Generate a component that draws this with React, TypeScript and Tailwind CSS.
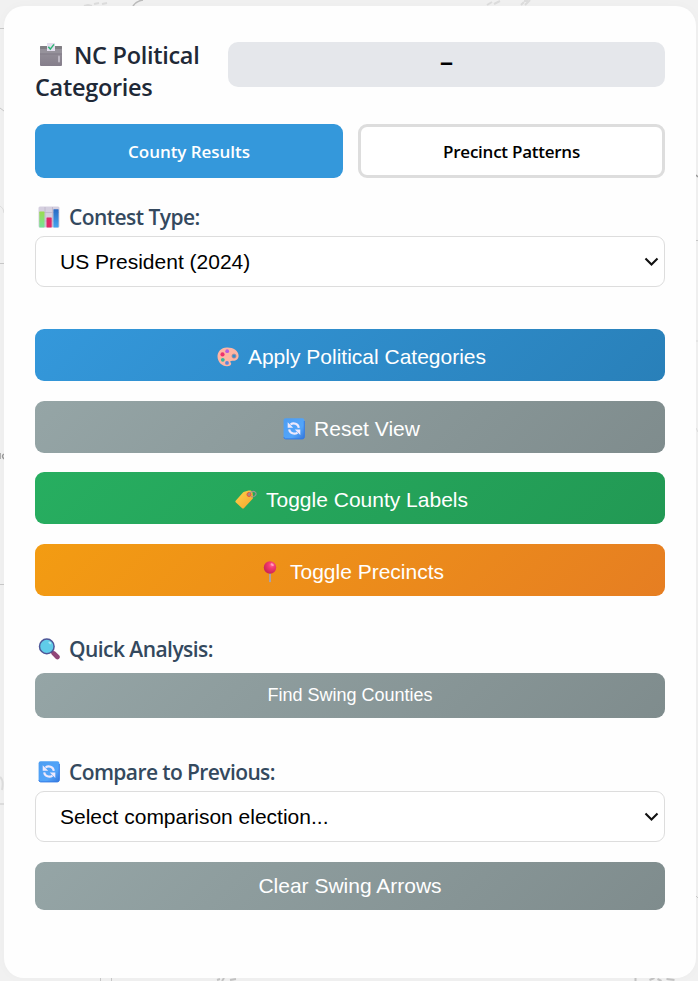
import type { ReactNode } from "react";

const ui = "font-['Open_Sans','Noto_Sans',sans-serif]";
const arial = "font-['Liberation_Sans',Arial,sans-serif]";

function BallotIcon() {
  return (
    <svg className="h-[25px] w-[24px] shrink-0" viewBox="0 0 24 25">
      <defs>
        <linearGradient id="ballot" x1="0" y1="0" x2="0" y2="1">
          <stop offset="0" stopColor="#98949c" />
          <stop offset="1" stopColor="#857e8b" />
        </linearGradient>
      </defs>
      <rect x="1" y="4" width="22" height="20" rx="1" fill="url(#ballot)" />
      <rect x="1" y="4" width="22" height="3" rx="1" fill="#7f7d82" />
      <rect x="1" y="7" width="22" height="4.500" fill="#96929b" />
      <rect x="1" y="11.500" width="22" height="1" fill="#827d88" />
      <path d="M8 1h8v8H8z" fill="#e4deee" />
      <path d="m9.300 4.800 2 2.300L15 2.400" fill="none" stroke="#2bb673" strokeWidth="1.500" />
      <rect x="19" y="13.500" width="2" height="7" rx="1" fill="#bcb7c2" />
    </svg>
  );
}

function ChartIcon() {
  return (
    <svg className="h-[22px] w-[22px] shrink-0" viewBox="0 0 22 22">
      <defs>
        <linearGradient id="barGreen" x1="0" y1="0" x2="0" y2="1">
          <stop offset="0" stopColor="#9bdc4d" />
          <stop offset="1" stopColor="#76e19a" />
        </linearGradient>
        <linearGradient id="barBlue" x1="0" y1="0" x2="0" y2="1">
          <stop offset="0" stopColor="#2869c4" />
          <stop offset="1" stopColor="#45a5ee" />
        </linearGradient>
      </defs>
      <rect x=".5" y=".5" width="21" height="21" rx="1.5" fill="#d5cfdf" />
      <path d="M7 1v20M14.5 1v20M1 6.5h20M1 15h20" stroke="#bcb5c8" strokeWidth=".8" />
      <rect x="1.3" y="5.5" width="5.2" height="16" rx=".4" fill="url(#barGreen)" />
      <rect x="8.5" y="11.5" width="5.2" height="10" rx=".4" fill="#df2866" />
      <rect x="15.4" y="3.3" width="5.2" height="18.2" rx=".4" fill="url(#barBlue)" />
    </svg>
  );
}

function PaletteIcon() {
  return (
    <svg className="h-[22px] w-[22px] shrink-0" viewBox="0 0 22 22">
      <path
        fill="#ffb5a3"
        fillRule="evenodd"
        d="M9.7 1.4C4 1.6.4 5.6.5 10.6c.1 5.6 4.5 9.600 9.300 9.700 2.700.100 4.600-1.100 4.400-2.700-.100-1-1.100-1.200-1-2 .100-.900 1.400-.800 3-.900 3.100-.100 5.400-1.800 5.400-5C21.600 4.700 16 1.100 9.700 1.400ZM17 8.200a1.900 1.900 0 1 1 0 3.800 1.900 1.900 0 0 1 0-3.800Z"
      />
      <circle cx="5.5" cy="8.4" r="2.1" fill="#ee326d" />
      <circle cx="10.2" cy="5.2" r="1.9" fill="#b85be1" />
      <circle cx="5.8" cy="13.8" r="1.9" fill="#35b7a2" />
      <circle cx="10" cy="16.9" r="1.9" fill="#5a87dc" />
      <circle cx="17" cy="10.100" r="2.100" fill="none" stroke="#95798c" strokeWidth=".600" />
    </svg>
  );
}

function RefreshIcon() {
  return (
    <svg className="h-[22px] w-[22px] shrink-0" viewBox="0 0 22 22">
      <defs>
        <linearGradient id="refresh" x1="0" y1="0" x2="1" y2="1">
          <stop offset="0" stopColor="#4d9df1" />
          <stop offset=".65" stopColor="#53a5fa" />
          <stop offset="1" stopColor="#3476db" />
        </linearGradient>
      </defs>
      <rect x=".6" y=".2" width="20.8" height="20.8" rx="2" fill="url(#refresh)" />
      <path d="M1 19.100c0 1.300.700 1.800 1.800 1.800h16.400c1.300 0 2.100-.700 2.100-2V3" fill="none" stroke="#347be5" strokeWidth="1" />
      <path d="M7.500 6.500c3-2.300 7.800-.800 8.300 3.300M14.500 14.600c-3 2.200-7.800.800-8.300-3.300" fill="none" stroke="#eee9fc" strokeWidth="2.100" />
      <path d="M4.700 4.300v5.500h5.500L4.700 4.300ZM17.300 16.900v-5.500h-5.500l5.500 5.500Z" fill="#eee9fc" />
    </svg>
  );
}

function TagIcon() {
  return (
    <svg className="h-[22px] w-[22px] shrink-0" viewBox="0 0 22 22">
      <defs>
        <linearGradient id="tag" x1="0" y1="0" x2="1" y2="1">
          <stop offset="0" stopColor="#ffd34b" />
          <stop offset="1" stopColor="#f4a42d" />
        </linearGradient>
      </defs>
      <path d="m9.300 2.800 4.200-1.200c1.400-.400 3.600-.200 3.900 1.500l.600 5.100c.100.900-.200 1.500-.800 2.100l-8.100 8.600c-.700.700-1.500.700-2.200 0L.9 13.500c-.700-.700-.700-1.400 0-2.100l7.300-8.100c.300-.300.600-.400 1.100-.500Z" fill="url(#tag)" />
      <circle cx="14" cy="5.500" r="2" fill="#a88c83" stroke="#e9533e" strokeWidth="1" />
      <path d="M13.800 5.500c1.600-3.500 5.600-3.800 6.900-1.900 1.500 2.400-2 5.200-4.700 4" fill="none" stroke="#9b9292" strokeWidth="1.100" />
    </svg>
  );
}

function PinIcon() {
  return (
    <svg className="h-[22px] w-[22px] shrink-0" viewBox="0 0 22 22">
      <defs>
        <radialGradient id="pin" cx=".65" cy=".3" r=".7">
          <stop offset="0" stopColor="#ff6c9b" />
          <stop offset=".35" stopColor="#f53b73" />
          <stop offset="1" stopColor="#cc2456" />
        </radialGradient>
      </defs>
      <path d="M10 12h2v8.500l-1 1-1-1z" fill="#aaa0a9" />
      <circle cx="11" cy="6.500" r="6.200" fill="url(#pin)" />
      <ellipse cx="13.200" cy="3.700" rx="1.700" ry="1.100" fill="#ff9dba" transform="rotate(35 13.200 3.700)" />
    </svg>
  );
}

function SearchIcon() {
  return (
    <svg className="h-[22px] w-[22px] shrink-0" viewBox="0 0 22 22">
      <path d="m13 13 3 3" stroke="#604776" strokeWidth="2.500" />
      <path d="m15.800 15.400 3.600 3.600" stroke="#914778" strokeWidth="4.700" strokeLinecap="round" />
      <circle cx="8.800" cy="8.400" r="7.300" fill="#60cce9" stroke="#4e5697" strokeWidth="1.500" />
      <ellipse cx="11.900" cy="4.900" rx="1.700" ry="1" fill="#a8e7f5" transform="rotate(35 11.900 4.900)" />
    </svg>
  );
}

function MapBackdrop() {
  return (
    <svg className="absolute inset-0 h-full w-full" viewBox="0 0 698 981" fill="none" stroke="#c8c8c8">
      <path d="M133 6q3-5 10-6" stroke="#bbb" strokeWidth="1.500" />
      <path d="M0 28.500h4M0 108l4 3M0 263.500h4M0 584.500h4M100.500 978v3M111.500 978v3M696 240.500h2M696 896l2 2" />
      <path d="M0 206q4 2 4 7M696 341h2M696 428l2 4" stroke="#ddd" />
      <path d="m84 6 4-1 4 1m2-2 5-1m3 1 5-1M487 5l5-3m2 2 6-3M521 5l3-3m1 3 5-5m-6 1h4" stroke="#ddd" strokeWidth="2" />
      <path d="M696 175l2 2M0 453v6m4-5q-3 2 0 5" stroke="#999" strokeWidth="1.500" />
      <path d="M0 777q4 3 2 13m-2 14h4" stroke="#ddd" strokeWidth="2" />
      <path d="M217 980l3-1m4-1-2 3m8-1 6-1M635.500 981v-3m14 2 5-2m3 1 4 2m5-2 8 1" stroke="#c4c4c4" strokeWidth="2" />
    </svg>
  );
}

function SectionLabel({ icon, className, children }: { icon: ReactNode; className: string; children: ReactNode }) {
  return (
    <div className={`${ui} flex h-[30px] items-center gap-[9px] pl-[3px] text-[21px] font-[560] text-[#34495e] ${className}`}>
      {icon}
      <span className="pt-px whitespace-nowrap">{children}</span>
    </div>
  );
}

function SelectField({ children }: { children: ReactNode }) {
  return (
    <button className={`${arial} flex h-[51px] w-full items-center justify-between rounded-[9px] border border-[#ddd] bg-white pr-[5px] pl-6 text-[21px] text-black`}>
      <span>{children}</span>
      <svg className="h-[10px] w-[15px]" viewBox="0 0 15 10" fill="none">
        <path d="m1.500 1.500 6 6 6-6" stroke="#111" strokeWidth="2.100" />
      </svg>
    </button>
  );
}

function ActionButton({ icon, className, children }: { icon?: ReactNode; className: string; children: ReactNode }) {
  return (
    <button className={`${arial} flex w-full items-center justify-center gap-[9px] rounded-[9px] text-white ${className}`}>
      {icon}
      <span>{children}</span>
    </button>
  );
}

export default function App() {
  return (
    <div className="relative h-[981px] w-[698px] overflow-hidden bg-[#f1f1f1] pt-1.5 pl-1">
      <MapBackdrop />
      <main className="relative h-[972px] w-[692px] rounded-[20px] bg-[#fefefe] px-[31px] pt-[32px] shadow-[0_0_12px_rgba(0,0,0,0.025)]">
        <header className="flex h-[86px] items-start gap-[15px]">
          <h1 className={`${ui} w-[178px] text-[23.5px] leading-8 font-[560] tracking-[-0.3px] text-[#1f2937]`}>
            <span className="flex items-center gap-[11px] pl-1 whitespace-nowrap">
              <BallotIcon />
              <span className="pt-px">NC Political</span>
            </span>
            <span className="block">Categories</span>
          </h1>
          <div className="mt-1 flex h-[45px] w-[437px] justify-center rounded-[10px] bg-[#e5e7eb]">
            <span className={`${ui} text-[27px] leading-[38px] font-semibold text-black`}>–</span>
          </div>
        </header>

        <div className={`${ui} flex gap-[15px] text-[17px] font-semibold`}>
          <button className="h-[54px] w-[308px] rounded-[9px] bg-[#3498db] pt-0.5 tracking-[-0.05px] text-white">County Results</button>
          <button className="h-[54px] w-[307px] rounded-[9px] border-[3px] border-[#ddd] bg-white pt-0.5 tracking-[-0.25px] text-black">Precinct Patterns</button>
        </div>

        <section className="mt-6">
          <SectionLabel icon={<ChartIcon />} className="tracking-[-0.55px]">Contest Type:</SectionLabel>
          <div className="mt-1">
            <SelectField>US President (2024)</SelectField>
          </div>
        </section>

        <section className="mt-[42px] text-[21px]">
          <ActionButton icon={<PaletteIcon />} className="h-[52px] bg-[linear-gradient(135deg,#3498db,#2980b9)] pt-[3px] pl-[3px]">
            Apply Political Categories
          </ActionButton>
          <ActionButton icon={<RefreshIcon />} className="mt-5 h-[52px] bg-[linear-gradient(135deg,#95a5a6,#7f8c8d)] pt-[3px] pl-[3px]">
            Reset View
          </ActionButton>
          <ActionButton icon={<TagIcon />} className="mt-[19px] h-[52px] bg-[linear-gradient(135deg,#27ae60,#229954)] pt-[3px] pl-[3px]">
            Toggle County Labels
          </ActionButton>
          <ActionButton icon={<PinIcon />} className="mt-5 h-[52px] bg-[linear-gradient(135deg,#f39c12,#e67e22)] pt-[3px] pl-[3px]">
            Toggle Precincts
          </ActionButton>
        </section>

        <section className="mt-[38px]">
          <SectionLabel icon={<SearchIcon />} className="tracking-[-0.55px]">Quick Analysis:</SectionLabel>
          <ActionButton className="mt-[9px] h-[45px] bg-[linear-gradient(135deg,#95a5a6,#7f8c8d)] text-[18px]">Find Swing Counties</ActionButton>
        </section>

        <section className="mt-[39px]">
          <SectionLabel icon={<RefreshIcon />} className="tracking-[-0.6px]">Compare to Previous:</SectionLabel>
          <div className="mt-1">
            <SelectField>Select comparison election...</SelectField>
          </div>
          <ActionButton className="mt-5 h-[48px] bg-[linear-gradient(135deg,#95a5a6,#7f8c8d)] text-[21px]">Clear Swing Arrows</ActionButton>
        </section>
      </main>
    </div>
  );
}
